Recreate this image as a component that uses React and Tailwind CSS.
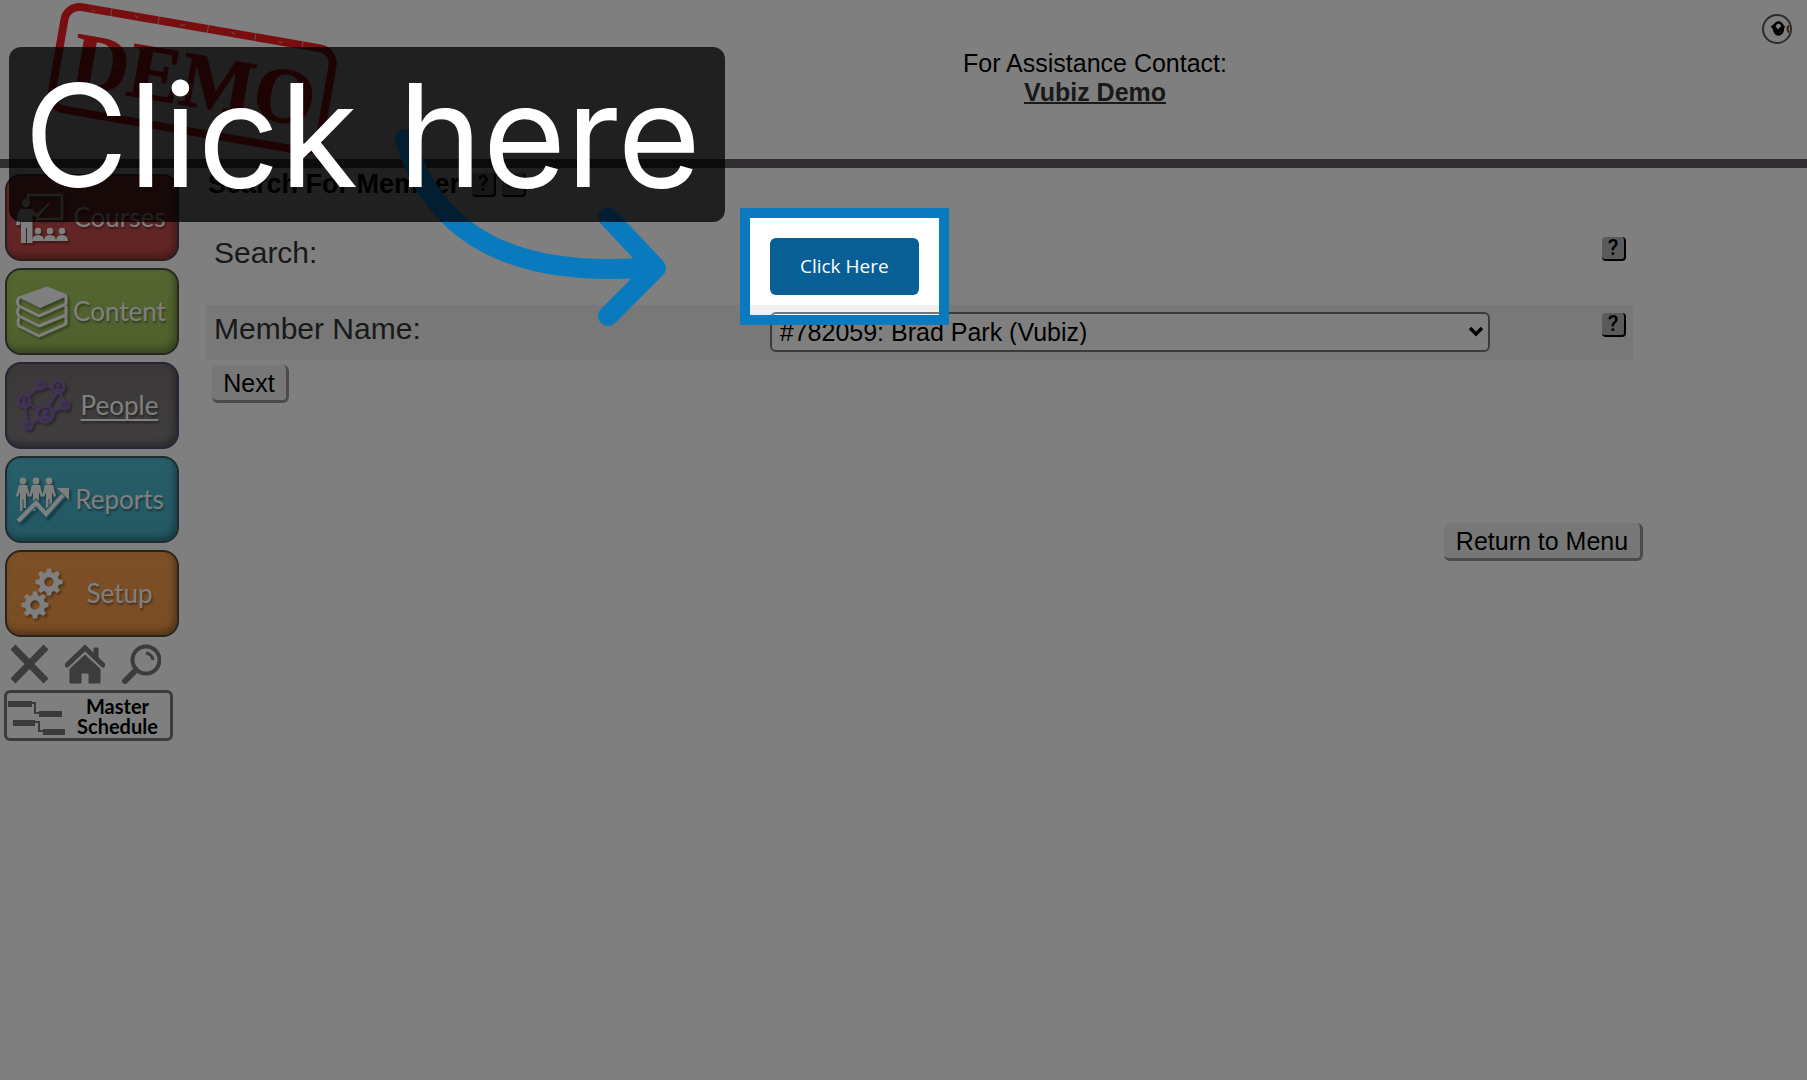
import React from "react";

const shadow = { filter: "drop-shadow(2px 2px 1px rgba(0,0,0,0.35))" };

function CoursesIcon() {
  return (
    <svg viewBox="0 0 54 54" className="w-[54px] h-[54px] shrink-0" style={shadow} aria-hidden="true">
      <path d="M12 9V4h34v24H20" fill="none" stroke="#fff" strokeWidth="2.4" />
      <circle cx="10" cy="12" r="4.2" fill="#fff" />
      <path d="M5 18h11l5 5 11-11 1.500 1.500-12 13.500-5-3v28H11V37h-1v15H5V28l-1 6H0l2-12z" fill="#fff" />
      {[22, 34, 46].map((x) => (
        <g key={x} fill="#fff">
          <circle cx={x} cy="40" r="3.200" />
          <path d={`M${x - 6} 50q0-6 6-6t6 6z`} />
        </g>
      ))}
    </svg>
  );
}

function ContentIcon() {
  return (
    <svg viewBox="0 0 54 54" className="w-[54px] h-[54px] shrink-0" style={shadow} aria-hidden="true">
      <path d="M3 12 31 2l20 8-28 12z" fill="#fff" stroke="#fff" strokeLinejoin="round" />
      <path
        d="M3 12q-3 5 0 9l20 10 27-12v-8M3 23q-3 4 0 8l20 10 27-11v-9M3 33q-2 4 0 8l20 10 27-12v-8M23 22l27-12"
        fill="none" stroke="#fff" strokeWidth="3" strokeLinejoin="round"
      />
    </svg>
  );
}

function PeopleIcon() {
  const big = [[8, 22, 6], [42, 8, 6], [29, 35, 8]];
  const small = [[24, 6, 4], [49, 26, 4], [12, 46, 4]];
  return (
    <svg viewBox="0 0 54 54" className="w-[54px] h-[54px] shrink-0" style={shadow} aria-hidden="true">
      <path d="M12 17 21 9M28 7l8 1M40 14l-8 14M44 14l4 8M36 33l10-5M14 25l8 7M9 29l2 13M23 40l-8 4" fill="none" stroke="#8465b0" strokeWidth="2.600" />
      {[...big, ...small].map(([x, y, r]) => (
        <g key={`${x}-${y}`}>
          <circle cx={x} cy={y} r={r} fill="none" stroke="#8465b0" strokeWidth="3" />
          <circle cx={x} cy={y - r / 4} r={r / 3} fill="#8465b0" />
          <path d={`M${x - r * 0.7} ${y + r * 0.7}q${r * 0.7} ${-r * 1.2} ${r * 1.4} 0z`} fill="#8465b0" />
        </g>
      ))}
    </svg>
  );
}

function ReportsIcon() {
  return (
    <svg viewBox="0 0 54 54" className="w-[54px] h-[54px] shrink-0" style={shadow} aria-hidden="true">
      {[7, 20, 33].map((x) => (
        <g key={x} fill="#fff">
          <circle cx={x} cy="8" r="3.400" />
          <path d={`M${x - 4} 12h8l3 11-2 1-2-5v16h-2.500v-9h-1v12H${x - 3}V19l-2 5-2-1z`} />
        </g>
      ))}
      <path d="M2 48 20 30l10 11 17-19" fill="none" stroke="#47b0c6" strokeWidth="7" />
      <path d="M2 48 20 30l10 11 17-19" fill="none" stroke="#fff" strokeWidth="4" />
      <path d="M41 15h12v12z" fill="#fff" />
    </svg>
  );
}

const teeth = [0, 45, 90, 135, 180, 225, 270, 315];

function SetupIcon() {
  return (
    <svg viewBox="0 0 54 54" className="w-[54px] h-[54px] shrink-0" style={shadow} aria-hidden="true">
      {[[33, 15], [19, 38]].map(([x, y]) => (
        <g key={x} transform={`translate(${x} ${y})`}>
          <circle r="7.500" fill="none" stroke="#fff" strokeWidth="5.500" />
          {teeth.map((a) => (
            <path key={a} d="M-3-9-2-13.500H2L3-9z" fill="#fff" transform={`rotate(${a})`} />
          ))}
        </g>
      ))}
    </svg>
  );
}

const nav = [
  { label: "Courses", Icon: CoursesIcon, look: "bg-linear-to-b from-[#c24a4a] to-[#c64b4b] border-[#4c3a3a] text-white" },
  { label: "Content", Icon: ContentIcon, look: "bg-linear-to-b from-[#a9cc61] to-[#9cbf58] border-[#4a4f45] text-white" },
  { label: "People", Icon: PeopleIcon, look: "bg-linear-to-b from-[#767270] to-[#807c7c] border-[#54446c] text-white underline underline-offset-4 decoration-2" },
  { label: "Reports", Icon: ReportsIcon, look: "bg-linear-to-b from-[#50bdd2] to-[#45b0c6] border-[#3e565c] text-white" },
  { label: "Setup", Icon: SetupIcon, look: "bg-linear-to-b from-[#fa9f4c] to-[#f3994a] border-[#54483e] text-white" },
];

function HelpButton({ label }) {
  return (
    <button
      aria-label={label}
      className="flex h-6 w-6 shrink-0 items-center justify-center rounded border-r-2 border-b-2 border-black bg-[#b4b4b4] font-['Roboto',sans-serif] text-[22px] leading-5 font-medium text-black"
    >
      ?
    </button>
  );
}

function Stamp() {
  return (
    <svg viewBox="0 0 300 158" className="absolute top-0.5 left-[41px] h-[158px] w-[300px]" role="img" aria-label="Demo">
      <g transform="rotate(9.8 151 78)">
        <rect x="15" y="25" width="272" height="104" rx="15" fill="none" stroke="#f01c20" strokeWidth="8" />
        <text x="153" y="104" textAnchor="middle" fontSize="79" fontWeight="700" fontFamily="Liberation Serif, serif" fill="#f01c20" stroke="#f01c20" strokeWidth="1">
          DEMO
        </text>
        <path d="M60 21v9M108 20v10M158 20v10M206 20v10M254 21v9M40 26l4 1M84 24l3 2M130 26l5-1M182 24l4 2M230 26l4-1M60 60l3 1M96 54l4 3M74 78l3-2M120 72l3 3M214 66l3 2" stroke="#fff" strokeOpacity="0.5" strokeWidth="1" />
      </g>
    </svg>
  );
}

const actionButton =
  "rounded-md border-r-3 border-b-3 border-[#999] bg-[#efefef] h-[38px] pt-[2px] text-[25px] leading-none text-black";

export default function App() {
  return (
    <div className="relative min-h-screen overflow-hidden bg-white font-['Liberation_Sans',sans-serif] text-black">
      <header className="relative flex h-[168px] border-b-9 border-[#605c62]">
        <Stamp />
        <div className="ml-[383px] flex-1 pt-[49px] text-center text-[25px] leading-[29px]">
          <p>For Assistance Contact:</p>
          <a href="#contact" className="font-bold text-[#333] underline decoration-2">Vubiz Demo</a>
        </div>
        <button
          aria-label="Go"
          className="absolute top-[14px] right-[15px] flex h-[30px] w-[30px] items-center justify-center overflow-hidden rounded-full border-2 border-[#555]"
        >
          <svg viewBox="0 0 26 26" className="h-[26px] w-[26px] shrink-0" aria-hidden="true">
            <path d="M8 9.500l6 6.500 6-6.500" fill="none" stroke="#000" strokeWidth="3.500" />
            <ellipse cx="14.500" cy="12.500" rx="4.500" ry="6" fill="none" stroke="#000" strokeWidth="2.400" />
            <path d="M25 9.500q-3 3.500 0 7" fill="none" stroke="#74421c" strokeWidth="2" />
          </svg>
        </button>
      </header>

      <div className="flex">
        <aside className="w-[206px] shrink-0 pt-[6px]">
          <nav className="flex flex-col gap-[7px] pl-[5px] font-['Lato',sans-serif]">
            {nav.map(({ label, Icon, look }) => (
              <a
                key={label}
                href={`#${label.toLowerCase()}`}
                className={`flex h-[87px] w-[174px] items-center rounded-2xl border-2 pr-2 pl-[9px] text-[26px] shadow-[inset_-3px_-4px_6px_rgba(0,0,0,0.3)] ${look}`}
              >
                <Icon />
                <span className="flex-1 text-center [text-shadow:1px_2px_2px_rgba(0,0,0,0.4)]">{label}</span>
              </a>
            ))}
          </nav>
          <div className="mt-[7px] flex gap-4 pl-[9px] text-[#7a7878]">
            <button aria-label="Close">
              <svg viewBox="0 0 40 40" className="h-10 w-10" aria-hidden="true">
                <path d="M4 3 37 37M37 3 4 37" stroke="currentColor" strokeWidth="7" />
              </svg>
            </button>
            <button aria-label="Home">
              <svg viewBox="0 0 40 40" className="h-10 w-10" aria-hidden="true">
                <path d="M2 21 20 4l18 17" fill="none" stroke="currentColor" strokeWidth="5" strokeLinecap="round" />
                <path d="M29 4h4v12l-4-4zM20 11 35 25v14H24V29h-8v10H5V25z" fill="currentColor" stroke="currentColor" strokeLinejoin="round" />
              </svg>
            </button>
            <button aria-label="Find">
              <svg viewBox="0 0 40 40" className="h-10 w-10" aria-hidden="true">
                <circle cx="25" cy="16" r="13.500" fill="none" stroke="currentColor" strokeWidth="4" />
                <path d="M25 9q6 1 7 7" fill="none" stroke="currentColor" strokeWidth="3" />
                <path d="M15 26 4 37" stroke="currentColor" strokeWidth="6" strokeLinecap="round" />
              </svg>
            </button>
          </div>
          <a
            href="#schedule"
            className="mt-[6px] ml-1 flex h-[51px] w-[169px] items-center rounded-md border-3 border-[#777] pr-1 font-['Lato',sans-serif] text-xl leading-5 font-bold"
          >
            <svg viewBox="0 0 62 40" className="h-10 w-[62px] shrink-0" aria-hidden="true">
              <path d="M1 8h24M32 18h23M6 27h22M36 36h22" stroke="#777" strokeWidth="6" />
              <path d="M24 7h4v10h5M28 26h4v9h5" fill="none" stroke="#777" strokeWidth="2" />
            </svg>
            <span className="flex-1 text-center">Master<br />Schedule</span>
          </a>
        </aside>

        <main className="flex-1 pr-[174px]">
          <h1 className="flex h-[33px] items-center gap-[6px] pl-[2px] text-[27px] font-bold">
            <span className="mr-[6px]">Search For Member</span>
            <HelpButton label="Help with this page" />
            <button aria-label="Open guide" className="h-6 w-6 rounded border-r-2 border-b-2 border-black bg-[#b4b4b4] p-[5px]">
              <span className="block h-2 w-3 rounded-sm bg-[#7c9440]" />
            </button>
          </h1>

          <div className="flex h-[104px] items-start pt-[35px] pr-[7px] pl-2">
            <span className="w-[calc(40%_-_9px)] text-[30px] leading-[34px] text-[#333]">Search:</span>
            <div className="relative mt-[2px]">
              <button className="h-[57px] w-[149px] rounded-md bg-[#085f96] font-['Open_Sans',sans-serif] text-[19px] text-white">
                Click Here
              </button>
              <span className="pointer-events-none absolute -inset-[30px] z-10 border-10 border-[#0a7abf] shadow-[0_0_0_9999px_rgba(0,0,0,0.5)]" />
            </div>
            <div className="ml-auto pt-px">
              <HelpButton label="Help with search" />
            </div>
          </div>

          <div className="flex h-[55px] items-start bg-[#f0f0f0] pt-[7px] pr-[7px] pl-2">
            <label htmlFor="member" className="w-[calc(40%_-_9px)] shrink-0 text-[30px] leading-[34px] text-[#333]">Member Name:</label>
            <div className="relative mr-28 flex-1">
              <select id="member" className="block h-10 w-full appearance-none rounded-md border-2 border-[#767676] bg-white pl-2 text-[25px] leading-none">
                <option>#782059: Brad Park (Vubiz)</option>
              </select>
              <svg viewBox="0 0 16 12" className="pointer-events-none absolute top-[14px] right-[6px] h-3 w-4" aria-hidden="true">
                <path d="M2 2l6 6 6-6" fill="none" stroke="#000" strokeWidth="3.500" />
              </svg>
            </div>
            <div className="pt-px">
              <HelpButton label="Help with member name" />
            </div>
          </div>

          <div className="pt-[5px] pl-[6px]">
            <button className={`${actionButton} w-[77px]`}>Next</button>
          </div>
          <div className="-mr-[10px] mt-[120px] flex justify-end">
            <button className={`${actionButton} w-[199px]`}>Return to Menu</button>
          </div>
        </main>
      </div>

      <svg viewBox="0 0 290 220" className="pointer-events-none absolute top-[120px] left-[390px] z-20 h-[220px] w-[290px]" aria-hidden="true">
        <g fill="none" stroke="#0a7abf" strokeWidth="20" strokeLinecap="round" strokeLinejoin="round">
          <path d="M15 19C45 120 130 159 264 147" />
          <path d="M218 97 266 148 218 196" />
        </g>
      </svg>

      <div className="absolute top-[47px] left-[9px] z-30 rounded-xl bg-black/75 pr-6 pl-[15px] font-['Inter',sans-serif] text-[143px] leading-[175px] text-white">
        Click here
      </div>
    </div>
  );
}
